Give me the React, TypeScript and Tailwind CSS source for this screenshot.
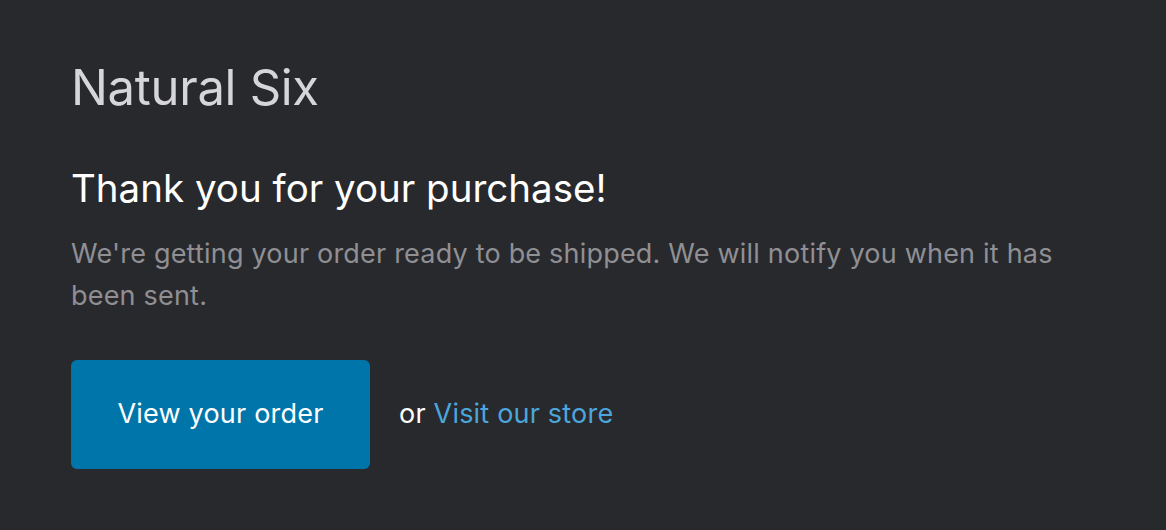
export default function App() {
  return (
    <div
      className="w-[1166px] h-[530px] bg-[#28292d] pl-[71px] pt-[56px]"
      style={{ fontFamily: "Inter, 'Noto Sans', sans-serif" }}
    >
      <h1 className="text-[49px] leading-[64px] text-[#d6d6d8] font-normal tracking-[-0.3px]">Natural Six</h1>
      <h2 className="mt-[43px] text-[38.5px] leading-[50px] text-white font-normal">Thank you for your purchase!</h2>
      <p className="mt-[20px] w-[1000px] text-[27px] leading-[42px] text-[#8f8f94] tracking-[0.2px]">
        We're getting your order ready to be shipped. We will notify you when it has been sent.
      </p>
      <div className="mt-[43px] flex items-center">
        <a className="flex items-center justify-center w-[299px] h-[109px] rounded-[6px] bg-[#0075aa] text-white text-[27px] tracking-[0.2px]">
          View your order
        </a>
        <span className="ml-[29px] text-white text-[27px] tracking-[0.2px]">
          or <a className="text-[#4ba6dc]">Visit our store</a>
        </span>
      </div>
    </div>
  );
}
